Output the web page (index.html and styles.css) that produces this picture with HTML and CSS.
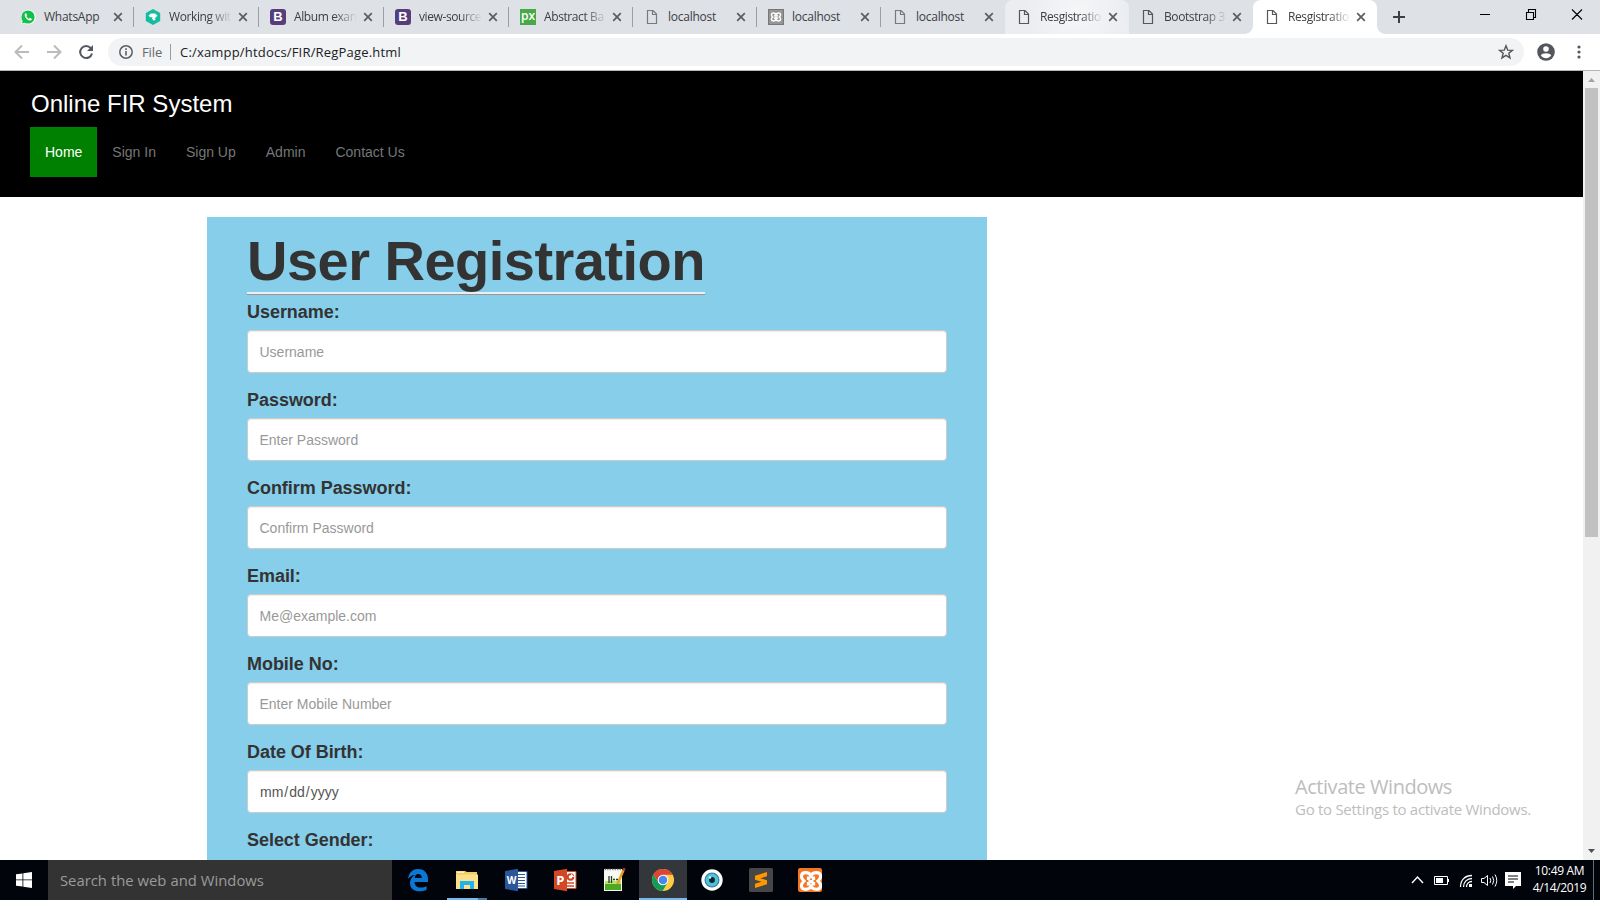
FILE: index.html
```html
<!DOCTYPE html>
<html lang="en">
<head>
<meta charset="utf-8">
<title>Resgistration</title>
<link rel="stylesheet" href="styles.css">
</head>
<body>
<svg class="defs" width="0" height="0">
  <symbol id="doc" viewBox="0 0 16 16"><path d="M3.500 1.500H9L12.500 5V14.500H3.500Z M8.500 1.500V5.500H12.500" fill="none" stroke="currentColor" stroke-width="1.200"/></symbol>
  <symbol id="x" viewBox="0 0 10 10"><path d="M1.200 1.200L8.800 8.800M8.800 1.200L1.200 8.800" stroke="#5a5d61" stroke-width="1.700"/></symbol>
  <symbol id="xampp" viewBox="0 0 16 16"><path d="M8 5.200C7 3 3 2.800 2.800 5.300C2.700 6.800 3.600 7.300 4.300 8C3.600 8.700 2.700 9.200 2.800 10.700C3 13.200 7 13 8 10.800C9 13 13 13.200 13.200 10.700C13.300 9.200 12.400 8.700 11.700 8C12.400 7.300 13.300 6.800 13.200 5.300C13 2.800 9 3 8 5.200ZM6.600 5.500V7.500M9.400 5.500V7.500M6.600 8.300H9.400M6.600 8.500V10.500M9.400 8.500V10.500" fill="none" stroke="#fff" stroke-width="1.700"/></symbol>
</svg>
<div class="tabs">
  <div class="tab wide"><svg class="fav" viewBox="0 0 16 16"><path d="M1 15.500L2 11.500A7.300 7.300 0 1 1 4.800 14.400Z" fill="#fff"/><circle cx="8" cy="8" r="6.600" fill="#12c04a"/><path d="M2 14.500L3 11L5 13.500Z" fill="#12c04a"/><path d="M5 4.500C3.500 7 7.500 12.500 11 11.300C12.500 10.500 12 9.700 10 8.800L9 9.800C7.800 9.300 7 8.400 6.400 7.200L7 6.300L6.200 4.300Z" fill="#fff"/></svg><span class="t">WhatsApp</span><svg class="x"><use href="#x"/></svg></div>
  <div class="tab wide"><svg class="fav" viewBox="0 0 16 16"><path d="M8 0L15.200 4V12L8 16L.800 12V4Z" fill="#15bda0"/><path d="M3.500 6.500L6 4.500H10L12.500 6.500L10 9.200L10.500 11L8.500 11.500L7 9.500L7.500 8.200L5 8.300Z" fill="#fff"/></svg><span class="t fade">Working wit</span><svg class="x"><use href="#x"/></svg></div>
  <div class="tab wide"><b class="fav boot">B</b><span class="t fade">Album exan</span><svg class="x"><use href="#x"/></svg></div>
  <div class="tab wide"><b class="fav boot">B</b><span class="t fade">view-source</span><svg class="x"><use href="#x"/></svg></div>
  <div class="tab"><b class="fav px">px</b><span class="t fade">Abstract Ba</span><svg class="x"><use href="#x"/></svg></div>
  <div class="tab"><svg class="fav dim"><use href="#doc"/></svg><span class="t">localhost</span><svg class="x"><use href="#x"/></svg></div>
  <div class="tab"><svg class="fav gx"><use href="#xampp"/></svg><span class="t">localhost</span><svg class="x"><use href="#x"/></svg></div>
  <div class="tab nosep"><svg class="fav dim"><use href="#doc"/></svg><span class="t">localhost</span><svg class="x"><use href="#x"/></svg></div>
  <div class="tab nosep hover"><svg class="fav"><use href="#doc"/></svg><span class="t fade">Resgistratio</span><svg class="x"><use href="#x"/></svg></div>
  <div class="tab nosep"><svg class="fav"><use href="#doc"/></svg><span class="t fade">Bootstrap 3</span><svg class="x"><use href="#x"/></svg></div>
  <div class="tab nosep active"><svg class="fav"><use href="#doc"/></svg><span class="t fade">Resgistratio</span><svg class="x"><use href="#x"/></svg></div>
  <svg class="plus" viewBox="0 0 12 12"><path d="M6 0V12M0 6H12" stroke="#3c4043" stroke-width="2"/></svg>
  <svg class="winctl" viewBox="0 0 130 28"><path d="M10 14.500H20M56.500 12.500H63.500V19.500H56.500ZM58.500 12V9.500H65.500V17.500H64M102 9.500L112 19.500M112 9.500L102 19.500" fill="none" stroke="#000" stroke-width="1.100"/></svg>
</div>
<div class="toolbar">
  <svg class="navs" viewBox="0 0 108 36"><g fill="none" stroke-width="2"><path d="M29 18H16.500M22 11.500L15.500 18L22 24.500M47 18H59.500M54 11.500L60.500 18L54 24.500" stroke="#b9bbbd"/><path d="M90.800 14.200A6 6 0 1 0 92 19.500" stroke="#54585c"/></g><path d="M93 11V17H87Z" fill="#54585c"/></svg>
  <div class="omni">
    <svg class="info" viewBox="0 0 14 14"><circle cx="7" cy="7" r="6.200" fill="none" stroke="#5a5e63" stroke-width="1.500"/><path d="M7 6V10.500M7 3.300V5" stroke="#5a5e63" stroke-width="1.600"/></svg>
    <span class="file">File</span><span class="url">C:/xampp/htdocs/FIR/RegPage.html</span>
    <svg class="star" viewBox="0 0 16 16"><path d="M8 1.800L9.700 6.100L14.300 6.400L10.800 9.300L12 13.900L8 11.400L4 13.900L5.200 9.300L1.700 6.400L6.300 6.100Z" fill="none" stroke="#54585c" stroke-width="1.400"/></svg>
  </div>
  <svg class="user" viewBox="0 0 18 18"><circle cx="9" cy="9" r="8.800" fill="#54565d"/><circle cx="9" cy="6" r="2.800" fill="#fff"/><path d="M3.800 12.600C5 9.600 13 9.600 14.200 12.600C11.800 16 6.200 16 3.800 12.600Z" fill="#fff"/></svg>
  <svg class="dots" viewBox="0 0 4 14"><g fill="#54585c"><circle cx="2" cy="2" r="1.600"/><circle cx="2" cy="7" r="1.600"/><circle cx="2" cy="12" r="1.600"/></g></svg>
</div>
<div class="view">
  <div class="page">
    <header class="head">
      <div class="brand">Online FIR System</div>
      <nav class="nav"><a class="on">Home</a><a>Sign In</a><a>Sign Up</a><a>Admin</a><a>Contact Us</a></nav>
    </header>
    <main class="form">
      <h1>User Registration</h1>
      <label>Username:</label><div class="input">Username</div>
      <label>Password:</label><div class="input">Enter Password</div>
      <label>Confirm Password:</label><div class="input">Confirm Password</div>
      <label>Email:</label><div class="input">Me@example.com</div>
      <label>Mobile No:</label><div class="input">Enter Mobile Number</div>
      <label>Date Of Birth:</label><div class="input date"><span>mm</span><span>/</span><span>dd</span><span>/</span><span>yyyy</span></div>
      <label>Select Gender:</label>
    </main>
    <div class="mark"><div class="m1">Activate Windows</div><div class="m2">Go to Settings to activate Windows.</div></div>
  </div>
  <div class="scroll">
    <svg viewBox="0 0 17 17"><path d="M5 11L8.500 7L12 11Z" fill="#a3a3a3"/></svg>
    <div class="thumb"></div>
    <svg viewBox="0 0 17 17"><path d="M5 6L8.500 10L12 6Z" fill="#505050"/></svg>
  </div>
</div>
<div class="task">
  <div class="start"><svg width="16" height="16" viewBox="0 0 16 16"><path d="M0 2.300L6.500 1.400V7.500H0ZM7.300 1.200L16 0V7.500H7.300ZM0 8.300H6.500V14.600L0 13.700ZM7.300 8.300H16V16L7.300 14.700Z" fill="#fff"/></svg></div>
  <div class="search">Search the web and Windows</div>
  <div class="apps">
    <div class="app"><svg viewBox="0 0 24 24"><path d="M2 11C3 4 7 1 12 1C19 1 22 6 22 11V14H8.500C9 18 11 19.500 14.500 19.500C17 19.500 19 19 20.500 18V22C18 23 16 23.300 13.500 23.300C7.500 23.300 4 20 4 15C4 11.500 6 8.500 9 7C6 7 3.500 9 2 11ZM8.700 10H15.800C15.800 7.500 14.500 6 12.400 6C10.200 6 9 7.600 8.700 10Z" fill="#0a78d7"/></svg></div>
    <div class="app files"><svg viewBox="0 0 24 24"><path d="M1 3H10L12 4H22V7H23V21H1Z" fill="#f2cf60"/><path d="M1 6.500H23V21H1Z" fill="#fde08a"/><path d="M2 3.500H9V5H2Z" fill="#fff4bd"/><path d="M5 21V13H19V21H15V17H9V21Z" fill="#20b4ec"/></svg></div>
    <div class="app"><svg viewBox="0 0 24 24"><path d="M12 3.500H23V20.500H12Z" fill="#fff" stroke="#2b579a"/><path d="M14 6.500H21M14 9.500H21M14 12.500H21M14 15.500H21M14 18H21" stroke="#2b579a"/><path d="M1 3L14 .800V23.200L1 21Z" fill="#2b579a"/><text x="7.500" y="16" class="g">W</text></svg></div>
    <div class="app"><svg viewBox="0 0 24 24"><path d="M12 3.500H23V20.500H12Z" fill="#fff" stroke="#d24726"/><circle cx="17.500" cy="9" r="2.800" fill="none" stroke="#d24726" stroke-width="2"/><path d="M18 9V5.500L21.500 9Z" fill="#fff"/><path d="M14 15H21M14 18H21" stroke="#d24726" stroke-width="1.300"/><path d="M1 3L14 .800V23.200L1 21Z" fill="#d24726"/><text x="7.300" y="16.500" class="g big">P</text></svg></div>
    <div class="app"><svg viewBox="0 0 24 24"><path d="M2 1H20V23H2Z" fill="#f7f9f2"/><path d="M3 13H19V17H3Z" fill="#b9e36a"/><path d="M3 16H19V22H3Z" fill="#4caa22"/><path d="M2.500 1.500H19.500" stroke="#8a8d88" stroke-width="1.500" stroke-dasharray="1.500 1"/><path d="M7 8V15M9.500 8V15M11 11.500H13M14 11.500H16" stroke="#223d20" stroke-width="1.300"/><path d="M21.500 2L15.500 16" stroke="#e8a11c" stroke-width="2.600"/><path d="M22.500 0L21.500 2.500" stroke="#a33" stroke-width="2.600"/></svg></div>
    <div class="app open cur"><svg viewBox="0 0 24 24"><circle cx="12" cy="12" r="11" fill="#ffcd42"/><path d="M2.500 6.500A11 11 0 0 1 21.600 6.700H12L7.300 14.700Z" fill="#dc4437"/><path d="M2.500 6.500L7.300 14.700H16.500L11.600 23A11 11 0 0 1 2.500 6.500Z" fill="#109d58"/><circle cx="12" cy="12" r="5.300" fill="#fff"/><circle cx="12" cy="12" r="4.300" fill="#4a86ee"/></svg></div>
    <div class="app"><svg viewBox="0 0 24 24"><circle cx="12" cy="12" r="10.700" fill="#fff"/><circle cx="12" cy="12" r="7.500" fill="#2b7f9c"/><circle cx="12" cy="12" r="6.400" fill="#54bfd5"/><circle cx="12" cy="12" r="2.900" fill="#0b2836"/><circle cx="10" cy="9.500" r="1.200" fill="#d6f3fa"/></svg></div>
    <div class="app"><svg viewBox="0 0 24 24"><rect width="24" height="24" rx="1.500" fill="#464646"/><path d="M18 4V8.300L11.500 10.300L18 12.300V16.300L6 20V15.700L12.500 13.700L6 11.700V7.700Z" fill="#ff9800"/></svg></div>
    <div class="app"><svg viewBox="0 0 24 24"><rect width="24" height="24" rx="2" fill="#f37623"/><svg x="1" y="1" width="22" height="22" viewBox="1.500 1.500 13 13"><use href="#xampp" width="16" height="16"/></svg></svg></div>
  </div>
  <svg class="tray" viewBox="0 0 130 40"><g fill="none" stroke="#fff"><path d="M12 23L17.500 17L23 23" stroke-width="1.400"/><path d="M34.500 16.500H47.500V24.500H34.500ZM48.500 19V22"/><path d="M60.500 27C60.500 20 65 15.500 72 15.500M63.500 27C63.500 22 67 18.500 72 18.500M66.500 27C66.500 24 68.500 21.500 72 21.500" stroke-width="1.300"/><path d="M81.500 18.500H84L87.500 15.500V25.500L84 22.500H81.500ZM90 18Q91.500 20.500 90 23M92.500 16.500Q95 20.500 92.500 24.500M95 14.500Q98.500 20.500 95 26.500"/></g><path d="M36 18H43V23H36ZM69 24H72V27H69ZM105 12H121V26H116L113 29V26H105Z" fill="#fff"/><path d="M108 16H118M108 19H118M108 22H114" stroke="#01040a"/></svg>
  <div class="clock"><div>10:49 AM</div><div class="day">4/14/2019</div></div>
</div>
</body>
</html>
```
FILE: styles.css
```css
* { box-sizing: border-box; }
body { margin: 0; width: 1600px; height: 900px; overflow: hidden; display: flex; flex-direction: column; background: #fff; font-family: "Liberation Sans", Arial, sans-serif; }
svg { display: block; flex: none; }
.defs { position: absolute; }
.tabs { height: 34px; flex: none; display: flex; background: #dee1e6; padding-left: 9px; }
.tab { position: relative; width: 124px; flex: none; display: flex; align-items: center; padding-left: 11px; font: 12px "Open Sans", sans-serif; color: #3c4043; }
.tab.wide { width: 125px; }
.tab:not(.nosep)::after { content: ""; position: absolute; right: 0; top: 7px; width: 1px; height: 20px; background: #9c9fa3; }
.fav { width: 16px; height: 16px; color: #55585b; flex: none; }
.fav.dim { color: #77797c; }
.fav.gx { background: #969494; border: 1px solid #777; }
.boot { background: #563d7c; border-radius: 3px; color: #fff; font: bold 13px/16px "Liberation Sans", sans-serif; text-align: center; }
.px { background: #48a947; color: #fff; font: 600 12px/13px "Open Sans", sans-serif; text-align: center; }
.t { width: 65px; margin-left: 8px; margin-right: 4px; padding-bottom: 1px; white-space: nowrap; letter-spacing: -.25px; }
.wide .t { margin-right: 4px; }
.nosep .t, .tab:not(.wide) .t { margin-right: 3px; }
.fade { letter-spacing: -.4px; -webkit-mask-image: linear-gradient(90deg, #000 62%, transparent 97%); mask-image: linear-gradient(90deg, #000 62%, transparent 97%); }
.x { width: 10px; height: 10px; }
.hover { background: radial-gradient(circle at 72px 12px, #f4f6f8, #ebedf0 50px); border-radius: 8px 8px 0 0; }
.active { background: #fff; border-radius: 8px 8px 0 0; }
.active::before { content: ""; position: absolute; left: -8px; right: -8px; bottom: 0; height: 8px; background: radial-gradient(circle at 0 0, transparent 7.500px, #fff 8px) left / 8px 8px no-repeat, radial-gradient(circle at 100% 0, transparent 7.500px, #fff 8px) right / 8px 8px no-repeat; }
.plus { width: 12px; height: 12px; margin: 11px 0 0 16px; }
.winctl { width: 130px; height: 28px; margin-left: 65px; }
.toolbar { height: 37px; flex: none; display: flex; border-bottom: 1px solid #b4b6b5; }
.navs { width: 108px; height: 36px; }
.omni { width: 1416px; height: 28px; margin-top: 4px; border-radius: 14px; background: #f1f3f4; display: flex; align-items: center; padding: 0 10px 0 11px; font: 14px "Open Sans", sans-serif; }
.info { width: 14px; height: 14px; }
.file { margin-left: 9px; width: 29px; height: 16px; line-height: 16px; color: #67696d; border-right: 1px solid #9a9c9f; letter-spacing: -.1px; font-size: 13px; }
.url { margin-left: 9px; color: #202124; font-size: 13px; white-space: nowrap; letter-spacing: .19px; }
.star { width: 16px; height: 16px; margin-left: auto; }
.user { width: 18px; height: 18px; margin: 9px 0 0 13px; }
.dots { width: 4px; height: 14px; margin: 11px 0 0 22px; }
.view { height: 789px; flex: none; display: flex; }
.page { width: 1583px; height: 789px; position: relative; overflow: hidden; }
.head { height: 126px; background: #000; padding: 18px 30px 0; }
.brand { height: 38px; padding-left: 1px; font-size: 24px; line-height: 30px; color: #fff; }
.nav { display: flex; }
.nav a { height: 50px; padding: 0 15px; line-height: 50px; font-size: 14px; color: #777; }
.nav a.on { background: green; color: #fff; }
.form { width: 780px; height: 660px; margin: 20px 0 0 207px; padding: 13px 40px 0; background: #87ceeb; color: #333; }
h1 { margin: 0 0 7px; width: 458px; height: 65px; border-bottom: 1px solid #999; box-shadow: inset 0 -2px #eee; font-size: 56px; line-height: 62px; white-space: nowrap; letter-spacing: -.52px; }
label { display: block; height: 28px; font-size: 18px; line-height: 20px; font-weight: bold; letter-spacing: -.04px; }
.input { height: 43px; margin-bottom: 17px; border: 1px solid #ccc; border-radius: 4px; background: #fff; box-shadow: inset 0 1px 1px rgba(0,0,0,.075); padding: 0 11.500px; font-size: 14px; line-height: 42px; color: #999; }
.date { display: flex; gap: 1px; color: #555; padding-left: 12px; }
.mark { position: absolute; left: 1295px; top: 703px; font-family: "Open Sans", sans-serif; color: #bdbdbd; white-space: nowrap; }
.m1 { font-size: 20px; line-height: 26px; letter-spacing: -.45px; }
.m2 { font-size: 15px; line-height: 18px; letter-spacing: -.28px; }
.scroll { width: 17px; background: #f1f1f1; display: flex; flex-direction: column; }
.scroll svg { width: 17px; height: 17px; }
.thumb { width: 13px; height: 449px; margin: 0 2px auto; background: #c1c1c1; }
.task { height: 40px; flex: none; background: #01040a; display: flex; color: #fff; font-family: "Open Sans", sans-serif; }
.start { width: 48px; display: flex; align-items: center; justify-content: center; }
.search { width: 344px; background: #333; padding-left: 12px; font-size: 15px; line-height: 40px; color: #9b9b9b; white-space: nowrap; letter-spacing: -.38px; word-spacing: .2px; letter-spacing: 0; font-size: 14.800px; }
.apps { display: flex; gap: 1px; margin-left: 2px; }
.app { width: 48px; display: flex; align-items: center; justify-content: center; }
.app svg { width: 24px; height: 24px; }
.open { box-shadow: inset 0 -2px #76b9ed; }
.files { background: linear-gradient(90deg, #76b9ed 31px, #4c79a3 31px) 4px bottom / 40px 2px no-repeat; }
.cur { background: #33373c; }
.g { fill: #fff; font: bold 10px "Open Sans", sans-serif; text-anchor: middle; }
.big { font-size: 13px; }
.tray { width: 130px; height: 40px; margin-left: 566px; }
.clock { width: 64px; margin-right: 4px; border-right: 1px solid #666b70; padding: 2px 4px 0 0; font-size: 12px; line-height: 17px; text-align: center; letter-spacing: -.35px; white-space: nowrap; }
```
